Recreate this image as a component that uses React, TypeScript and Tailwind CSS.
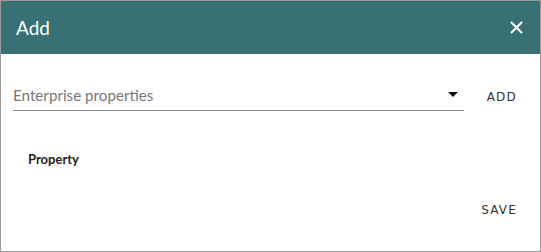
import React from "react";

const App = () => {
  return (
    <div className="w-[541px] h-[252px] border border-[#9a9a9a] bg-white flex flex-col" style={{ fontFamily: "Lato, 'Open Sans', sans-serif" }}>
      <div className="h-[53px] bg-[#377173] flex items-center justify-between pl-[15px] pr-[17px]">
        <span className="text-white text-[19px] leading-none">Add</span>
        <svg width="13" height="13" viewBox="0 0 13 13" className="text-white">
          <path d="M1 1 L12 12 M12 1 L1 12" stroke="currentColor" strokeWidth="2" />
        </svg>
      </div>
      <div className="flex items-end pl-[12px] pr-[23px] pt-[31px]">
        <div className="w-[451px] h-[26px] border-b border-[#8a8a8a] flex items-start justify-between">
          <span className="text-[15.2px] leading-[20px] text-[#777]">Enterprise properties</span>
          <svg width="10" height="6" viewBox="0 0 10 6" className="mt-[7px] mr-[6px]">
            <path d="M0 0 L10 0 L5 5 Z" fill="#111" />
          </svg>
        </div>
        <button className="ml-auto mb-[5px] text-[12px] tracking-[1.2px] text-[#333]" style={{ fontFamily: "'DejaVu Sans', Verdana, sans-serif" }}>ADD</button>
      </div>
      <div className="pl-[27px] pt-[39px] text-[13px] font-bold text-[#222]">Property</div>
      <div className="flex justify-end pr-[23px] pt-[31px]">
        <button className="text-[12px] tracking-[1.2px] text-[#333]" style={{ fontFamily: "'DejaVu Sans', Verdana, sans-serif" }}>SAVE</button>
      </div>
    </div>
  );
};

export default App;
